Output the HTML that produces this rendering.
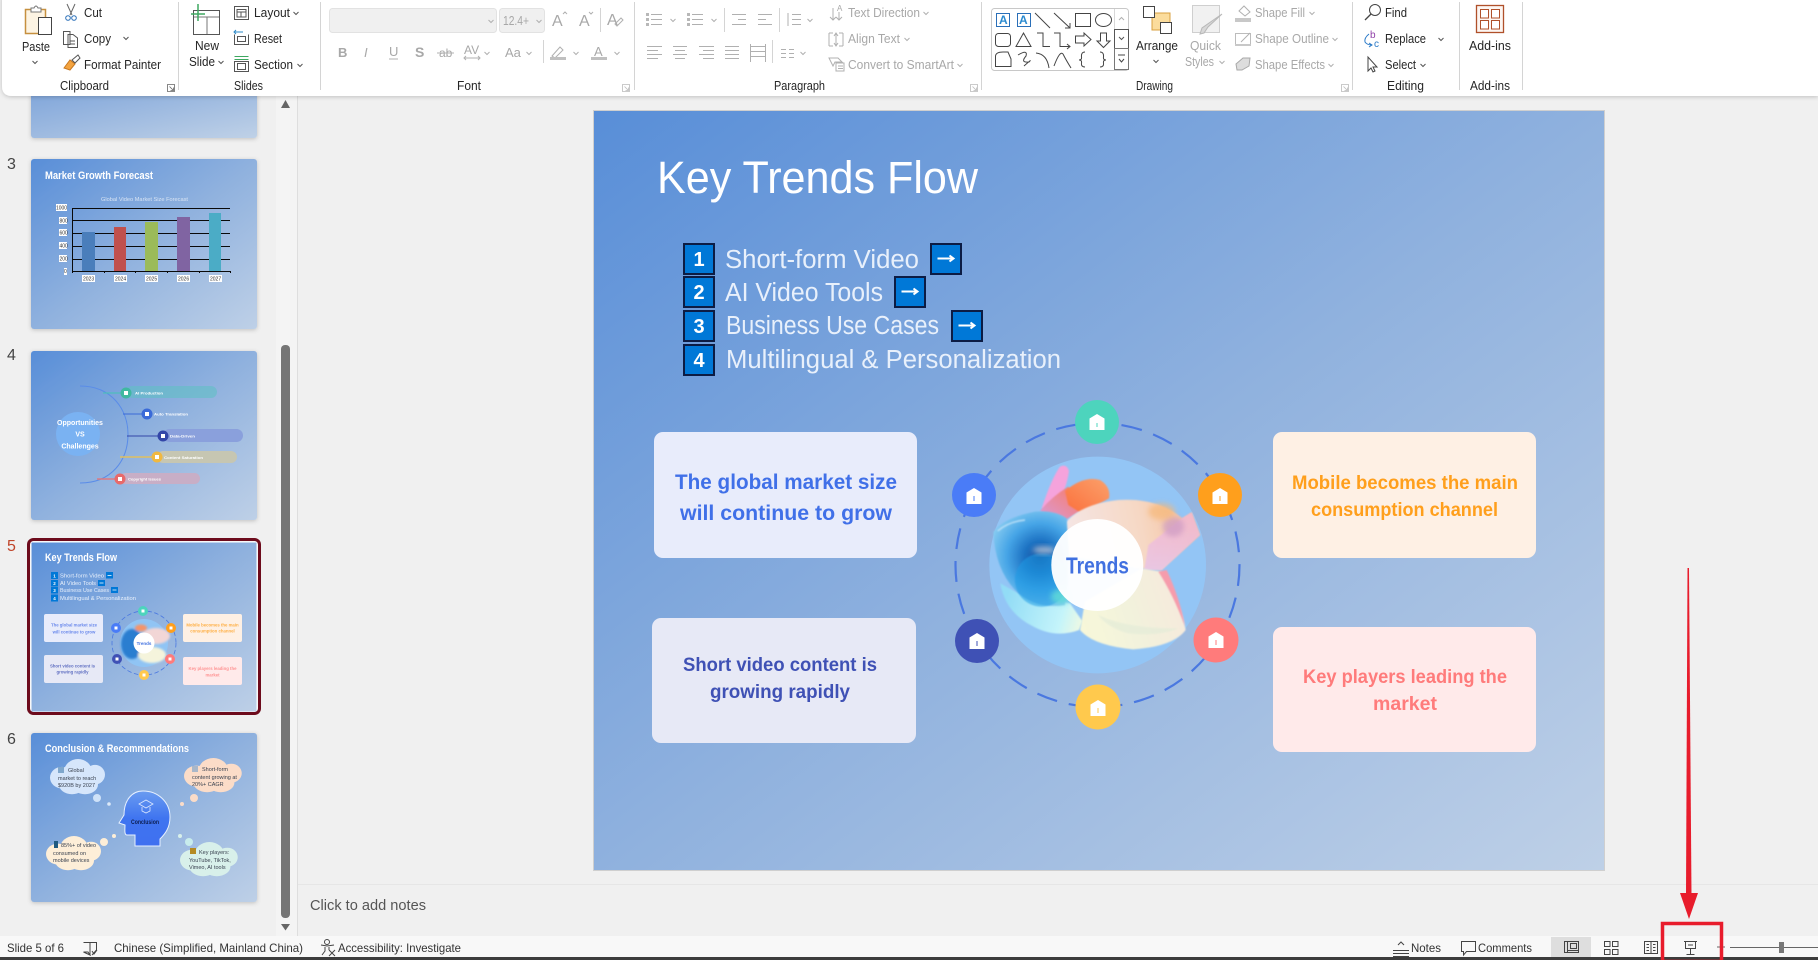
<!DOCTYPE html>
<html lang="en"><head><meta charset="utf-8"><title>Key Trends Flow</title>
<style>
html,body{margin:0;padding:0;background:#f0f0f0;width:1818px;height:960px;overflow:hidden}
svg{display:block;position:absolute;left:0;top:0}
text{font-family:"Liberation Sans",sans-serif;white-space:pre}
.r{font-size:12.5px;fill:#262626}
.d{font-size:12.5px;fill:#a8a8a8}
.i{fill:none;stroke:#555;stroke-width:1}
.g{fill:none;stroke:#b0b0b0;stroke-width:1}
.s{fill:none;stroke:#444;stroke-width:1}
.b{font-weight:bold}
.w{fill:#fff}
</style></head><body>
<svg width="1818" height="960" viewBox="0 0 1818 960" xmlns="http://www.w3.org/2000/svg">
<defs>
<linearGradient id="bg" x1="0" y1="0" x2="1" y2="1"><stop offset="0" stop-color="#588ed8"/><stop offset=".5" stop-color="#8fb1de"/><stop offset="1" stop-color="#bed0e7"/></linearGradient>
<linearGradient id="top2" x1="0" y1="0" x2="1" y2="1"><stop offset="0" stop-color="#7fa5da"/><stop offset="1" stop-color="#bfd1e7"/></linearGradient>
<linearGradient id="head" x1="0" y1="0" x2="0" y2="1"><stop offset="0" stop-color="#6a9cf0"/><stop offset=".5" stop-color="#3f74f0"/><stop offset="1" stop-color="#3f70f0"/></linearGradient>
<radialGradient id="blue" gradientUnits="userSpaceOnUse" cx="165" cy="305" r="165"><stop offset="0" stop-color="#14509f"/><stop offset=".3" stop-color="#1f74c4"/><stop offset=".6" stop-color="#45a4e6"/><stop offset="1" stop-color="#8fd0f2"/></radialGradient>
<linearGradient id="peach" gradientUnits="userSpaceOnUse" x1="240" y1="260" x2="620" y2="180"><stop offset="0" stop-color="#f4e6e6"/><stop offset=".6" stop-color="#f6d8c4"/><stop offset="1" stop-color="#f4c09c"/></linearGradient>
<linearGradient id="pinkr" x1="0" y1="0" x2="0" y2="1"><stop offset="0" stop-color="#f4b8d0"/><stop offset="1" stop-color="#e8c4e8"/></linearGradient>
<linearGradient id="cream" gradientUnits="userSpaceOnUse" x1="260" y1="520" x2="600" y2="400"><stop offset="0" stop-color="#f8f8d8"/><stop offset=".5" stop-color="#f2f2dc"/><stop offset="1" stop-color="#f6e8dc"/></linearGradient>
<linearGradient id="cyan" gradientUnits="userSpaceOnUse" x1="60" y1="440" x2="300" y2="510"><stop offset="0" stop-color="#92dcf6"/><stop offset=".7" stop-color="#c4f4fa"/><stop offset="1" stop-color="#f4fae0"/></linearGradient>
<linearGradient id="orng" x1="0" y1="1" x2="1" y2="0"><stop offset="0" stop-color="#fa6f3c"/><stop offset="1" stop-color="#fca06a"/></linearGradient>
<linearGradient id="mag" x1="0" y1="1" x2="1" y2="0"><stop offset="0" stop-color="#d89ad8"/><stop offset="1" stop-color="#fb7a60"/></linearGradient>
<filter id="bl2" x="-20%" y="-20%" width="140%" height="140%"><feGaussianBlur stdDeviation="2"/></filter>
<filter id="bl1" x="-20%" y="-20%" width="140%" height="140%"><feGaussianBlur stdDeviation="1"/></filter>
<filter id="bl8" x="-40%" y="-40%" width="180%" height="180%"><feGaussianBlur stdDeviation="8"/></filter>
<filter id="sh" x="-5%" y="-20%" width="110%" height="160%"><feDropShadow dx="0" dy="1" stdDeviation="2" flood-color="#000" flood-opacity=".2"/></filter>
<path id="c" d="M-2.5 -1 L0 1.5 L2.5 -1" fill="none" stroke="#555" stroke-width="1"/>
<path id="cd" d="M-2.5 -1 L0 1.5 L2.5 -1" fill="none" stroke="#b0b0b0" stroke-width="1"/>
<path id="lau" d="M0 0H7V7H0Z M2 2L6 6M6 3V6H3" fill="none" stroke="#666" stroke-width=".8"/>
<path id="laud" d="M0 0H7V7H0Z M2 2L6 6M6 3V6H3" fill="none" stroke="#bbb" stroke-width=".8"/>
<path id="home" d="M0 -8 L7.5 -3.5 V8 H-7.5 V-3.5Z" fill="#fff"/>
<g id="cl"><ellipse cx="12" cy="19" rx="12" ry="11"/><ellipse cx="28" cy="13" rx="14" ry="13"/><ellipse cx="45" cy="16" rx="10" ry="10"/><ellipse cx="35" cy="26" rx="13" ry="10"/><ellipse cx="22" cy="26" rx="13" ry="10"/></g>
</defs>

<!-- base -->
<rect width="1818" height="960" fill="#f0f0f0"/>
<rect x="276" y="96" width="21" height="840" fill="#f4f4f4"/>
<line x1="297.500" y1="96" x2="297.500" y2="936" stroke="#dedede"/>
<line x1="298" y1="884.500" x2="1818" y2="884.500" stroke="#e6e6e6"/>

<!-- thumbnails -->
<rect x="31" y="90" width="226" height="48" rx="3" fill="url(#top2)" filter="url(#sh)"/>

<!-- slide 3 -->
<text x="7" y="169" font-size="16" fill="#444">3</text>
<rect x="31" y="159" width="226" height="170" rx="3" fill="url(#bg)" filter="url(#sh)"/>
<text x="45" y="179" font-size="11" class="b w" textLength="108" lengthAdjust="spacingAndGlyphs">Market Growth Forecast</text>
<text x="101" y="201" font-size="5.500" fill="#d8e4f4" textLength="87" lengthAdjust="spacingAndGlyphs">Global Video Market Size Forecast</text>
<g stroke="#0a0a0a" stroke-width="1"><path d="M72 208.500H230M72 220.500H230M72 233.500H230M72 246.500H230M72 259.500H230M72 271.500H230M72.500 208V273M104.500 271V273M135.500 271V273M167.500 271V273M199.500 271V273M230.500 271V273"/></g>
<rect x="82" y="232" width="13" height="39" fill="#4a7ebb"/><rect x="114" y="227" width="12" height="44" fill="#c0504d"/><rect x="145" y="222" width="13" height="49" fill="#9bbb59"/><rect x="177" y="217" width="13" height="54" fill="#8064a2"/><rect x="209" y="213" width="12" height="58" fill="#4bacc6"/>
<g fill="#fff"><rect x="56" y="204" width="11" height="7"/><rect x="59" y="217" width="8" height="7"/><rect x="59" y="229" width="8" height="7"/><rect x="59" y="242" width="8" height="7"/><rect x="59" y="255" width="8" height="7"/><rect x="64" y="268" width="3" height="7"/><rect x="82" y="275" width="13" height="7"/><rect x="114" y="275" width="13" height="7"/><rect x="145" y="275" width="13" height="7"/><rect x="177" y="275" width="13" height="7"/><rect x="209" y="275" width="13" height="7"/></g>
<g font-size="5" fill="#333"><text x="56" y="209.500" textLength="11" lengthAdjust="spacingAndGlyphs">1000</text><text x="59.500" y="222.500">800</text><text x="59.500" y="234.500">600</text><text x="59.500" y="247.500">400</text><text x="59.500" y="260.500">200</text><text x="64" y="273">0</text><text x="83" y="280.500">2023</text><text x="115" y="280.500">2024</text><text x="146" y="280.500">2025</text><text x="178" y="280.500">2026</text><text x="210" y="280.500">2027</text></g>

<!-- slide 4 -->
<text x="7" y="360" font-size="16" fill="#444">4</text>
<rect x="31" y="351" width="226" height="169" rx="3" fill="url(#bg)" filter="url(#sh)"/>
<circle cx="78" cy="434" r="22" fill="#7ab2f2"/>
<g font-size="7" class="b w" text-anchor="middle"><text x="80" y="425">Opportunities</text><text x="80" y="436.500">VS</text><text x="80" y="448.500">Challenges</text></g>
<path d="M80 386 C112 386 128 410 128 434 C128 460 112 483 80 483" fill="none" stroke="#5a8ce8" stroke-width="1"/>
<rect x="126" y="386" width="91" height="12" rx="6" fill="#60bfc4" opacity=".6"/>
<rect x="163" y="429" width="80" height="13" rx="6.500" fill="#8aa0dc"/>
<rect x="157" y="451" width="80" height="12" rx="6" fill="#c6c6b2"/>
<rect x="120" y="473" width="80" height="11" rx="5.500" fill="#c8aec6"/>
<g stroke-width="1" fill="none"><path d="M103 393H126" stroke="#44c4b4"/><path d="M123 414H147" stroke="#3a6ad8"/><path d="M127 436H163" stroke="#3346a8"/><path d="M120 457H157" stroke="#e0c060" stroke-width="1.500"/><path d="M97 479H120" stroke="#e07a80" stroke-width="1.500"/></g>
<circle cx="126" cy="393" r="5.500" fill="#3fb8a0"/><circle cx="147" cy="414" r="5.500" fill="#3a6ad8"/><circle cx="163" cy="436" r="5.500" fill="#3346a8"/><circle cx="157" cy="457" r="5.500" fill="#f0b840"/><circle cx="120" cy="479" r="5.500" fill="#e86a6a"/>
<g fill="#fff"><rect x="124" y="391" width="4" height="4"/><rect x="145" y="412" width="4" height="4"/><rect x="161" y="434" width="4" height="4"/><rect x="155" y="455" width="4" height="4"/><rect x="118" y="477" width="4" height="4"/></g>
<g font-size="4" class="b w"><text x="135" y="394.500" textLength="28" lengthAdjust="spacingAndGlyphs">AI Production</text><text x="154" y="415.500" textLength="34" lengthAdjust="spacingAndGlyphs">Auto Translation</text><text x="170" y="437.500" textLength="25" lengthAdjust="spacingAndGlyphs">Data-Driven</text><text x="164" y="459" textLength="39" lengthAdjust="spacingAndGlyphs">Content Saturation</text><text x="128" y="480.500" textLength="33" lengthAdjust="spacingAndGlyphs">Copyright Issues</text></g>

<!-- slide 5 thumb -->
<text x="7" y="551" font-size="16" fill="#c0452a">5</text>
<rect x="31" y="542" width="226" height="170" fill="url(#bg)" stroke="#fff" stroke-width="1"/>
<rect x="28.500" y="539.500" width="231" height="174" rx="5" fill="none" stroke="#6d0b1c" stroke-width="3"/>
<text x="45" y="561" font-size="11" class="b w" textLength="72" lengthAdjust="spacingAndGlyphs">Key Trends Flow</text>
<g fill="#0078d7"><rect x="51" y="572" width="7" height="7"/><rect x="51" y="580" width="7" height="6.500"/><rect x="51" y="587" width="7" height="6.500"/><rect x="51" y="594.500" width="7" height="7"/><rect x="106" y="572" width="7" height="6.500"/><rect x="98" y="580" width="7" height="6"/><rect x="111" y="587" width="7" height="6"/></g>
<path d="M107.500 575.500H111.500M99.500 583H103.500M112.500 590H116.500" stroke="#fff" fill="none" stroke-width=".7"/>
<g font-size="5.500" fill="#e8f0fb"><text x="60" y="577.500" textLength="44" lengthAdjust="spacingAndGlyphs">Short-form Video</text><text x="60" y="585" textLength="36" lengthAdjust="spacingAndGlyphs">AI Video Tools</text><text x="60" y="592" textLength="49" lengthAdjust="spacingAndGlyphs">Business Use Cases</text><text x="60" y="600" textLength="76" lengthAdjust="spacingAndGlyphs">Multilingual &amp; Personalization</text></g>
<g font-size="4.500" class="b w" text-anchor="middle"><text x="54.500" y="577.500">1</text><text x="54.500" y="585">2</text><text x="54.500" y="592">3</text><text x="54.500" y="600">4</text></g>
<rect x="44" y="614" width="59" height="28" rx="2" fill="#e8ecfb"/><rect x="44" y="655" width="59" height="28" rx="2" fill="#e7e9f6"/><rect x="183" y="614" width="59" height="28" rx="2" fill="#fef0e4"/><rect x="183" y="657" width="59" height="28" rx="2" fill="#ffeaea"/>
<g font-size="4.300" class="b" text-anchor="middle" opacity=".8"><g fill="#4a70e8"><text x="74" y="626.500">The global market size</text><text x="74" y="633.500">will continue to grow</text></g><g fill="#3f51b5"><text x="72.500" y="667.500">Short video content is</text><text x="72.500" y="673.500">growing rapidly</text></g><g fill="#ff9f1c"><text x="212.500" y="626.500">Mobile becomes the main</text><text x="212.500" y="632.500">consumption channel</text></g><g fill="#ff7b7b"><text x="212.500" y="670">Key players leading the</text><text x="212.500" y="676.500">market</text></g></g>
<circle cx="144" cy="643" r="24" fill="#90c4f4"/>
<g filter="url(#bl1)"><ellipse cx="132" cy="644" rx="11" ry="15" fill="#2a7ed0"/><ellipse cx="156" cy="636" rx="14" ry="8" fill="#f2d6d6"/><ellipse cx="152" cy="655" rx="14" ry="8" fill="#f5f4dc"/><ellipse cx="141" cy="628" rx="6" ry="3.500" fill="#f4946a"/></g>
<circle cx="144" cy="643" r="32" fill="none" stroke="#4a78e0" stroke-width=".8" stroke-dasharray="4.500 2.500"/>
<circle cx="144" cy="643" r="10.500" fill="#fff"/><text x="144" y="645" font-size="4.500" class="b" fill="#4070e0" text-anchor="middle">Trends</text>
<circle cx="143" cy="611" r="5" fill="#4dd4bd"/><circle cx="171" cy="628" r="5" fill="#ff9f1c"/><circle cx="170" cy="659" r="5" fill="#ff7b7b"/><circle cx="144" cy="675" r="5" fill="#ffc94d"/><circle cx="117" cy="659" r="5" fill="#3f51b5"/><circle cx="116" cy="628" r="5" fill="#4a7cf7"/>
<g fill="#fff"><rect x="141.500" y="609.500" width="3" height="3"/><rect x="169.500" y="626.500" width="3" height="3"/><rect x="168.500" y="657.500" width="3" height="3"/><rect x="142.500" y="673.500" width="3" height="3"/><rect x="115.500" y="657.500" width="3" height="3"/><rect x="114.500" y="626.500" width="3" height="3"/></g>

<!-- slide 6 -->
<text x="7" y="744" font-size="16" fill="#444">6</text>
<rect x="31" y="733" width="226" height="169" rx="3" fill="url(#bg)" filter="url(#sh)"/>
<text x="45" y="752" font-size="11" class="b w" textLength="144" lengthAdjust="spacingAndGlyphs">Conclusion &amp; Recommendations</text>
<use href="#cl" transform="translate(50 759) scale(1 .98)" fill="#d6e6fb"/>
<use href="#cl" transform="translate(184 758) scale(1.050 .95)" fill="#fbdcc8"/>
<use href="#cl" transform="translate(46 836) scale(1 .95)" fill="#fdeed8"/>
<use href="#cl" transform="translate(180 842) scale(1.050 .95)" fill="#d8f0ea"/>
<circle cx="97" cy="798" r="4" fill="#cfe2f8"/><circle cx="109" cy="804" r="1.800" fill="#dce9f8"/><circle cx="194" cy="798" r="4" fill="#fbdcc8"/><circle cx="182" cy="804" r="2" fill="#fbdcc8"/><circle cx="104" cy="842" r="4" fill="#fdeed8"/><circle cx="114" cy="836" r="2" fill="#fdeed8"/><circle cx="189" cy="842" r="4" fill="#c8ecec"/><circle cx="180" cy="836" r="2" fill="#d8f0ea"/>
<path d="M143 791 C158 791 170 802 170 817 C170 828 165 834 160 839 L160 846 L135 846 L135 835 L127 835 C124 835 125 829 125 825 L119 823 L124 815 C124 800 132 791 143 791 Z" fill="url(#head)" stroke="#e6f0ff" stroke-width="1"/>
<path d="M139 804L146 800L153 804L146 808ZM142 807V811L146 813L150 811V807" fill="none" stroke="#dbe8ff" stroke-width=".8"/>
<text x="131" y="824" font-size="6" class="b" fill="#0c1d50" textLength="28" lengthAdjust="spacingAndGlyphs">Conclusion</text>
<rect x="58" y="767" width="6" height="6" fill="#7fa7cc"/><rect x="192" y="766" width="6" height="6" fill="#a9b7c9"/><rect x="54" y="841" width="4" height="7" fill="#1f5a80"/><rect x="190" y="848" width="6" height="6" fill="#b58a22"/>
<g font-size="5.500" fill="#3a4250"><text x="68" y="772">Global</text><text x="58" y="780">market to reach</text><text x="58" y="787">$920B by 2027</text><text x="202" y="771">Short-form</text><text x="192" y="779">content growing at</text><text x="192" y="786">20%+ CAGR</text><text x="61" y="847">85%+ of video</text><text x="53" y="855">consumed on</text><text x="53" y="862">mobile devices</text><text x="199" y="854">Key players:</text><text x="189" y="862">YouTube, TikTok,</text><text x="189" y="869">Vimeo, AI tools</text></g>

<!-- scrollbar -->
<path d="M281 108L285.500 100L290 108Z" fill="#666"/>
<rect x="281" y="345" width="9" height="573" rx="4" fill="#757575"/>
<path d="M281 924H290L285.500 930.500Z" fill="#666"/>

<!-- main slide -->
<rect x="593.500" y="110.500" width="1011" height="760" fill="url(#bg)" stroke="#cfcfcf"/>
<text x="657" y="193" font-size="45" class="w" textLength="321" lengthAdjust="spacingAndGlyphs">Key Trends Flow</text>
<g fill="#0078d7" stroke="#0c1c44" stroke-width="2"><rect x="684" y="244" width="30" height="30"/><rect x="684" y="277" width="30" height="30"/><rect x="684" y="311" width="30" height="30"/><rect x="684" y="345" width="30" height="30"/><rect x="931" y="244" width="30" height="30"/><rect x="895" y="277" width="30" height="30"/><rect x="952" y="311" width="30" height="30"/></g>
<g font-size="20" class="b w" text-anchor="middle"><text x="699" y="266">1</text><text x="699" y="299">2</text><text x="699" y="333">3</text><text x="699" y="367">4</text></g>
<g fill="none" stroke="#fff" stroke-width="2"><path d="M937.500 258.500H953M949.500 255.500L953.500 258.500L949.500 261.500M901.500 291.500H917M913.500 288.500L917.500 291.500L913.500 294.500M958.500 325.500H974M970.500 322.500L974.500 325.500L970.500 328.500"/></g>
<g font-size="25.500" fill="#e8f0fb"><text x="725" y="268" textLength="194" lengthAdjust="spacingAndGlyphs">Short-form Video</text><text x="725" y="301" textLength="158" lengthAdjust="spacingAndGlyphs">AI Video Tools</text><text x="726" y="334" textLength="213" lengthAdjust="spacingAndGlyphs">Business Use Cases</text><text x="726" y="368" textLength="335" lengthAdjust="spacingAndGlyphs">Multilingual &amp; Personalization</text></g>

<rect x="654" y="432" width="263" height="126" rx="9" fill="#e8ecfb"/>
<rect x="652" y="618" width="264" height="125" rx="9" fill="#e7e9f6"/>
<rect x="1273" y="432" width="263" height="126" rx="9" fill="#fef0e4"/>
<rect x="1273" y="627" width="263" height="125" rx="9" fill="#ffeaea"/>
<g font-size="21" class="b" fill="#4070e8"><text x="675" y="489" textLength="222" lengthAdjust="spacingAndGlyphs">The global market size</text><text x="680" y="520" textLength="212" lengthAdjust="spacingAndGlyphs">will continue to grow</text></g>
<g font-size="19" class="b" fill="#3f51b5"><text x="683" y="671" textLength="194" lengthAdjust="spacingAndGlyphs">Short video content is</text><text x="710" y="698" textLength="140" lengthAdjust="spacingAndGlyphs">growing rapidly</text></g>
<g font-size="19" class="b" fill="#ff9f1c"><text x="1292" y="489" textLength="226" lengthAdjust="spacingAndGlyphs">Mobile becomes the main</text><text x="1311" y="516" textLength="187" lengthAdjust="spacingAndGlyphs">consumption channel</text></g>
<g font-size="19" class="b" fill="#ff7b7b"><text x="1303" y="683" textLength="204" lengthAdjust="spacingAndGlyphs">Key players leading the</text><text x="1373" y="710" textLength="64" lengthAdjust="spacingAndGlyphs">market</text></g>

<!-- centre graphic -->
<g transform="translate(985 455) scale(.33333)">
<circle cx="338" cy="330" r="325" fill="#93c5f5"/>
<path d="M170 160 Q200 70 225 35 Q245 25 252 48 Q245 100 215 155Z" fill="#f5a3dc" filter="url(#bl2)"/>
<path d="M165 168 Q200 125 250 95 L300 160 L240 195Z" fill="url(#mag)" filter="url(#bl2)"/>
<path d="M240 108 Q295 62 345 75 Q378 95 372 130 L290 175 L250 150Z" fill="url(#orng)" filter="url(#bl2)"/>
<path d="M228 225 Q265 150 400 135 Q520 128 592 190 L620 172 L645 240 L530 345 L460 340 L240 300Z" fill="url(#peach)" filter="url(#bl2)"/>
<path d="M478 345 L490 270 L590 190 L620 172 L645 240 L530 345Z" fill="url(#pinkr)" opacity=".85" filter="url(#bl2)"/>
<ellipse cx="565" cy="215" rx="32" ry="30" fill="#cf9cc4" opacity=".75" filter="url(#bl8)"/>
<ellipse cx="530" cy="170" rx="40" ry="25" fill="#f6b878" opacity=".7" filter="url(#bl8)"/>
<path d="M285 525 Q325 572 445 583 Q565 575 602 525 Q590 450 530 350 L470 340 L300 440Z" fill="url(#cream)" filter="url(#bl2)"/>
<path d="M340 480 Q420 520 580 520 Q520 545 430 535 Q370 520 340 480Z" fill="#e4ecd8" opacity=".7" filter="url(#bl2)"/>
<path d="M520 350 L545 345 Q585 430 600 515 Q565 420 520 350Z" fill="#f69cac" filter="url(#bl2)"/>
<path d="M46 385 Q60 470 140 512 Q210 552 282 525 L292 498 L255 445 L100 415Z" fill="url(#cyan)" filter="url(#bl2)"/>
<path d="M25 232 Q50 190 150 170 Q210 165 245 190 L252 300 L240 450 Q150 465 90 405 Q30 340 25 232Z" fill="url(#blue)" filter="url(#bl2)"/>
<circle cx="170" cy="375" r="80" fill="#1b9ae4" opacity=".55" filter="url(#bl2)"/>
<ellipse cx="228" cy="425" rx="30" ry="22" fill="#5fdad8" opacity=".85" filter="url(#bl8)"/>
<ellipse cx="178" cy="285" rx="34" ry="11" fill="#b8c6d8" opacity=".8" filter="url(#bl8)"/>
<path d="M38 228 Q70 200 120 195" fill="none" stroke="#bfe2f8" stroke-width="5" opacity=".8" filter="url(#bl2)"/>
</g>
<circle cx="1097.500" cy="565" r="142" fill="none" stroke="#4a78e0" stroke-width="2.200" stroke-dasharray="21 12"/>
<circle cx="1097.300" cy="565" r="46" fill="#fff" opacity=".96"/>
<text x="1066" y="573.500" font-size="23" class="b" fill="#4070e0" textLength="63" lengthAdjust="spacingAndGlyphs">Trends</text>
<g>
<circle cx="1097" cy="422" r="22" fill="#4dd4bd"/><use href="#home" x="1097" y="422"/><rect x="1096.500" y="423" width="1" height="4" fill="#4dd4bd"/>
<circle cx="1220" cy="495" r="22" fill="#ff9f1c"/><use href="#home" x="1220" y="496"/><rect x="1219.500" y="496" width="1" height="5" fill="#ff9f1c"/>
<circle cx="1216" cy="640" r="22.500" fill="#ff7b7b"/><use href="#home" x="1216" y="640"/><rect x="1215.500" y="640" width="1" height="5" fill="#ff7b7b"/>
<circle cx="1098" cy="707" r="22.500" fill="#ffc94d"/><use href="#home" x="1098" y="708"/><rect x="1097.500" y="708" width="1" height="5" fill="#ffc94d"/>
<circle cx="977" cy="641" r="22" fill="#3f51b5"/><use href="#home" x="977" y="641"/><rect x="976.500" y="641" width="1" height="5" fill="#3f51b5"/>
<circle cx="974" cy="495" r="22" fill="#4a7cf7"/><use href="#home" x="974" y="496"/><rect x="973.500" y="496" width="1" height="5" fill="#4a7cf7"/>
</g>

<text x="310" y="910" font-size="15" fill="#555" textLength="116" lengthAdjust="spacingAndGlyphs">Click to add notes</text>

<!-- ribbon -->
<path d="M2 -4H1818V96H12Q2 96 2 86Z" fill="#fff" filter="url(#sh)"/>
<g stroke="#d4d4d4"><path d="M178.500 2V90M320.500 2V90M634.500 2V90M981.500 2V90M1352.500 2V90M1459.500 2V90M1522.500 2V90M600.500 8V32M543.500 40V63M724.500 8V32M779.500 8V32M772.500 40V63" fill="none"/></g>

<!-- clipboard -->
<rect x="25.500" y="9.500" width="20" height="24" fill="#fdf4e3" stroke="#c6903f" stroke-width="1.500"/>
<path d="M31 11V8H34Q36 4 38 8H41V12H31Z" fill="#fff" stroke="#777"/>
<rect x="38.500" y="17.500" width="13" height="17" fill="#fff" stroke="#444"/>
<text x="22" y="51" class="r" textLength="28" lengthAdjust="spacingAndGlyphs">Paste</text><use href="#c" x="35" y="62"/>
<path d="M67 4L72 15M75 4L70 15" fill="none" stroke="#666"/><circle cx="68" cy="18" r="2.300" fill="none" stroke="#2a6fb8"/><circle cx="74" cy="18" r="2.300" fill="none" stroke="#2a6fb8"/>
<text x="84" y="17" class="r" textLength="18" lengthAdjust="spacingAndGlyphs">Cut</text>
<path d="M63.500 31.500H70V44.500H63.500ZM68 34.500H73L77.500 38V47.500H68Z" fill="#fff" stroke="#555"/><path d="M70 41H75M70 44H75" stroke="#555"/>
<text x="84" y="43" class="r" textLength="27" lengthAdjust="spacingAndGlyphs">Copy</text><use href="#c" x="126" y="38"/>
<path d="M64 68L70 60L75 64L70 70Z" fill="#f4a440" stroke="#c87820"/><path d="M72 60L78 55L80 58L75 63Z" fill="#fff" stroke="#555"/>
<text x="84" y="69" class="r" textLength="77" lengthAdjust="spacingAndGlyphs">Format Painter</text>
<text x="60" y="90" class="r" textLength="49" lengthAdjust="spacingAndGlyphs">Clipboard</text><use href="#lau" x="167.500" y="84.500"/>

<!-- slides -->
<rect x="193.500" y="10.500" width="26" height="24" fill="#fff" stroke="#555"/><path d="M194 17H219M207 17V34" stroke="#777" fill="none"/><path d="M191 14H205M198 4V21" stroke="#3ea860" stroke-width="1.500" fill="none"/>
<text x="195" y="50" class="r" textLength="24" lengthAdjust="spacingAndGlyphs">New</text><text x="189" y="66" class="r" textLength="26" lengthAdjust="spacingAndGlyphs">Slide</text><use href="#c" x="221" y="62"/>
<path d="M234.500 6.500H248.500V19.500H234.500ZM237 9.500H246V12H237ZM237 12V17H241V12M241 12V17H246V12" fill="none" stroke="#555"/>
<text x="254" y="17" class="r" textLength="36" lengthAdjust="spacingAndGlyphs">Layout</text><use href="#c" x="296" y="13"/>
<path d="M234.500 34.500V44.500H248.500V34.500" fill="none" stroke="#555"/><rect x="237.500" y="36.500" width="8" height="5" fill="none" stroke="#555"/><path d="M235 32H243M236 34L234 32L236 30" fill="none" stroke="#2a88c8"/>
<text x="254" y="43" class="r" textLength="28" lengthAdjust="spacingAndGlyphs">Reset</text>
<path d="M234.500 56.500H248.500M234.500 59.500H248.500" stroke="#3ea860" fill="none"/><rect x="234.500" y="61.500" width="14" height="10" fill="none" stroke="#555"/><rect x="237.500" y="63.500" width="8" height="6" fill="none" stroke="#555"/>
<text x="254" y="69" class="r" textLength="39" lengthAdjust="spacingAndGlyphs">Section</text><use href="#c" x="300" y="65"/>
<text x="234" y="90" class="r" textLength="29" lengthAdjust="spacingAndGlyphs">Slides</text>

<!-- font -->
<rect x="329.500" y="8.500" width="167" height="24" rx="3" fill="#f0f0f0" stroke="#e2e2e2"/><use href="#cd" x="491" y="21"/>
<rect x="499.500" y="8.500" width="45" height="24" rx="3" fill="#f0f0f0" stroke="#e2e2e2"/><text x="503" y="25" class="d" textLength="26" lengthAdjust="spacingAndGlyphs">12.4+</text><use href="#cd" x="539" y="21"/>
<g font-size="16" fill="#a8a8a8"><text x="552" y="26">A</text><text x="579" y="26">A</text><text x="607" y="25">A</text></g><path d="M563 14L565 12L567 14M589 12L591 14L593 12" class="g"/><path d="M615 24L621 18L623 20L617 26Z" class="g"/>
<text x="338" y="57" font-size="13" class="b" fill="#a8a8a8">B</text><text x="364" y="57" font-size="13" font-style="italic" font-family="Liberation Serif" fill="#a8a8a8">I</text><text x="389" y="56" font-size="13" fill="#a8a8a8">U</text><path d="M389 59H398" class="g"/><text x="415" y="57" font-size="14" class="b" fill="#a8a8a8">S</text><text x="439" y="57" font-size="12" fill="#a8a8a8">ab</text><path d="M437 53H454" class="g"/><text x="464" y="54" font-size="12" fill="#a8a8a8">AV</text><path d="M464 58H480M466 56L464 58L466 60M478 56L480 58L478 60" class="g"/><use href="#cd" x="487" y="53"/><text x="505" y="57" font-size="13" fill="#a8a8a8">Aa</text><use href="#cd" x="529" y="53"/>
<path d="M552 56L560 47L563 50L555 58Z" class="g"/><rect x="550" y="57" width="16" height="3" fill="#c0c0c0"/><use href="#cd" x="576" y="53"/><text x="594" y="56" font-size="13" fill="#a8a8a8">A</text><rect x="591" y="57" width="16" height="3" fill="#c0c0c0"/><use href="#cd" x="617" y="53"/>
<text x="457" y="90" class="r" textLength="24" lengthAdjust="spacingAndGlyphs">Font</text><use href="#laud" x="622.500" y="84.500"/>

<!-- paragraph -->
<path d="M651 14.500H662M651 19.500H662M651 24.500H662M692 14.500H703M692 19.500H703M692 24.500H703M732 14.500H746M738 19.500H746M738 24.500H746M732 24.500H746M758 14.500H772M758 19.500H766M758 24.500H772M792 14.500H801M792 19.500H801M792 24.500H801M788 13V26" class="g"/>
<g fill="#b8b8b8"><rect x="646" y="13" width="3" height="3"/><rect x="646" y="18" width="3" height="3"/><rect x="646" y="23" width="3" height="3"/><rect x="687" y="13" width="3" height="3"/><rect x="687" y="18" width="3" height="3"/><rect x="687" y="23" width="3" height="3"/></g>
<use href="#cd" x="673" y="20"/><use href="#cd" x="714" y="20"/><use href="#cd" x="810" y="20"/>
<path d="M647 46.500H662M647 50.500H658M647 54.500H662M647 58.500H658M673 46.500H687M675 50.500H685M673 54.500H687M675 58.500H685M699 46.500H714M703 50.500H714M699 54.500H714M703 58.500H714M725 46.500H739M725 50.500H739M725 54.500H739M725 58.500H739M750.500 44V62M765.500 44V62M751 46.500H765M751 51.500H765M751 56.500H765M781 49.500H786M781 53.500H786M781 57.500H786M789 49.500H794M789 53.500H794M789 57.500H794" class="g"/><use href="#cd" x="803" y="53"/>
<path d="M833 8V20M830 17L833 20L836 17M839 12V20M836 17L839 20L842 17" class="g"/><text x="837" y="11" font-size="8" fill="#a8a8a8">A</text>
<text x="848" y="17" class="d" textLength="72" lengthAdjust="spacingAndGlyphs">Text Direction</text><use href="#cd" x="926" y="13"/>
<path d="M829 33H833M839 33H843M829 33V46M843 33V46M829 46H833M839 46H843M836 33V46M834 36L836 33L838 36M834 43L836 46L838 43" class="g"/>
<text x="848" y="43" class="d" textLength="52" lengthAdjust="spacingAndGlyphs">Align Text</text><use href="#cd" x="907" y="39"/>
<path d="M829 58H838L842 62H835L833 66ZM836 63H844V71H836ZM838 66H843M838 68.500H843" class="g"/>
<text x="848" y="69" class="d" textLength="106" lengthAdjust="spacingAndGlyphs">Convert to SmartArt</text><use href="#cd" x="960" y="65"/>
<text x="774" y="90" class="r" textLength="51" lengthAdjust="spacingAndGlyphs">Paragraph</text><use href="#laud" x="970.500" y="84.500"/>

<!-- shapes gallery -->
<rect x="991.500" y="8.500" width="137" height="62" rx="3" fill="#fff" stroke="#c8c8c8"/>
<path d="M1114.500 9V70" stroke="#d8d8d8"/>
<rect x="1114.500" y="29.500" width="14" height="19" fill="#fff" stroke="#555"/><rect x="1114.500" y="48.500" width="14" height="21" fill="#fff" stroke="#777"/>
<path d="M1119 20L1121.500 17.500L1124 20" class="g"/><use href="#c" x="1121.500" y="38"/><path d="M1118 55H1125M1119 59L1121.500 62L1124 59" class="s"/>
<rect x="996.500" y="13.500" width="13" height="13" fill="#fff" stroke="#2a6fb8"/><text x="999" y="24" font-size="12" class="b" fill="#2a8ad0">A</text>
<rect x="1017.500" y="13.500" width="13" height="13" fill="#fff" stroke="#2a6fb8"/><text x="1019" y="24" font-size="12" class="b" fill="#2a8ad0">A</text>
<g class="s"><path d="M1035 13L1050 28M1054 13L1070 28M1070 23V28H1065"/><rect x="1075.500" y="13.500" width="15" height="13"/><ellipse cx="1103.500" cy="20" rx="8" ry="6.500"/><rect x="995.500" y="33.500" width="15" height="13" rx="3"/><path d="M1023.500 33L1031 46.500H1016ZM1037 33H1043V46.500H1050M1054 33H1060V46.500H1070M1067 44L1070 46.500L1067 49M1075.500 36H1084V33L1091 39.500L1084 46V43H1075.500ZM1100.500 33H1106.500V41H1110L1103.500 47.500L1097 41H1100.500Z"/><path d="M995.500 66.500V56Q996 52 1003 52H1008L1011 59V66.500ZM1018 55Q1028 49 1026 56Q1020 63 1029 62Q1033 58 1024 66M1036 53Q1047 54 1049 68M1054 66Q1060 50 1063 54Q1066 60 1071 68M1085 52Q1081 52 1081.500 57Q1082 60 1079 60Q1082 60 1081.500 63Q1081 67 1085 67M1100 52Q1104 52 1103.500 57Q1103 60 1106 60Q1103 60 1103.500 63Q1104 67 1100 67"/></g>

<text x="1136" y="50" class="r" textLength="42" lengthAdjust="spacingAndGlyphs">Arrange</text><use href="#c" x="1156" y="61"/>
<rect x="1152" y="13" width="18" height="17" fill="#fbdc9c" stroke="#d8a040"/><rect x="1143.500" y="6.500" width="11" height="11" fill="#fff" stroke="#444"/><rect x="1160.500" y="22.500" width="11" height="11" fill="#fff" stroke="#444"/>
<text x="1190" y="50" class="d" textLength="31" lengthAdjust="spacingAndGlyphs">Quick</text><text x="1185" y="66" class="d" textLength="29" lengthAdjust="spacingAndGlyphs">Styles</text><use href="#cd" x="1222" y="62"/>
<rect x="1192.500" y="5.500" width="27" height="27" fill="#f1f1f1" stroke="#cfcfcf"/><path d="M1222 14L1208 27L1204 33L1200 34L1202 28Z" fill="#d8d8d8" stroke="#b8b8b8"/>
<rect x="1235" y="18" width="16" height="4" fill="#c8c8c8"/><path d="M1239 11L1244 6L1250 12L1245 16Z" class="g"/><text x="1255" y="17" class="d" textLength="50" lengthAdjust="spacingAndGlyphs">Shape Fill</text><use href="#cd" x="1312" y="13"/>
<rect x="1235.500" y="33.500" width="15" height="11" fill="none" stroke="#bcbcbc"/><rect x="1235" y="44" width="16" height="2" fill="#c8c8c8"/><path d="M1241 42L1250 33" class="g"/><text x="1255" y="43" class="d" textLength="74" lengthAdjust="spacingAndGlyphs">Shape Outline</text><use href="#cd" x="1335" y="39"/>
<path d="M1236 64L1243 58H1250L1249 66L1242 70H1237Z" fill="#ddd" stroke="#a8a8a8"/><text x="1255" y="69" class="d" textLength="70" lengthAdjust="spacingAndGlyphs">Shape Effects</text><use href="#cd" x="1331" y="65"/>
<text x="1136" y="90" class="r" textLength="37" lengthAdjust="spacingAndGlyphs">Drawing</text><use href="#laud" x="1341.500" y="84.500"/>

<!-- editing -->
<circle cx="1375" cy="10" r="5.500" fill="none" stroke="#444"/><path d="M1371 14L1365 20" stroke="#444" stroke-width="1.300"/>
<text x="1385" y="17" class="r" textLength="22" lengthAdjust="spacingAndGlyphs">Find</text>
<text x="1370" y="38" font-size="10" fill="#9040a8">b</text><text x="1374" y="47" font-size="10" fill="#2a7ac8">c</text><path d="M1369 34Q1364 38 1365 42Q1367 45 1372 45M1369 43L1372 45L1369 47" fill="none" stroke="#2a7ac8"/>
<text x="1385" y="43" class="r" textLength="41" lengthAdjust="spacingAndGlyphs">Replace</text><use href="#c" x="1441" y="39"/>
<path d="M1368 57V71L1371 68L1373 72L1375 71L1373 67H1377Z" fill="#fff" stroke="#444"/>
<text x="1385" y="69" class="r" textLength="31" lengthAdjust="spacingAndGlyphs">Select</text><use href="#c" x="1423" y="65"/>
<text x="1387" y="90" class="r" textLength="37" lengthAdjust="spacingAndGlyphs">Editing</text>
<rect x="1476.500" y="5.500" width="27" height="27" fill="#fdf6f2" stroke="#b0502a" stroke-width="1.300"/>
<path d="M1480.500 9.500H1488.500V18H1480.500ZM1491.500 9.500H1499.500V18H1491.500ZM1480.500 20.500H1488.500V29H1480.500ZM1491.500 20.500H1499.500V29H1491.500Z" fill="#fff" stroke="#b0502a"/>
<text x="1469" y="50" class="r" textLength="42" lengthAdjust="spacingAndGlyphs">Add-ins</text>
<text x="1470" y="90" class="r" textLength="40" lengthAdjust="spacingAndGlyphs">Add-ins</text>

<!-- status bar -->
<rect x="0" y="936" width="1818" height="21" fill="#f8f8f8"/>
<rect x="0" y="957" width="1818" height="3" fill="#3d3d3d"/>
<rect x="1551" y="937" width="40" height="20" fill="#dedede"/>
<g font-size="12" fill="#333">
<text x="7" y="952" textLength="57" lengthAdjust="spacingAndGlyphs">Slide 5 of 6</text>
<text x="114" y="952" textLength="189" lengthAdjust="spacingAndGlyphs">Chinese (Simplified, Mainland China)</text>
<text x="338" y="952" textLength="123" lengthAdjust="spacingAndGlyphs">Accessibility: Investigate</text>
<text x="1411" y="952" textLength="30" lengthAdjust="spacingAndGlyphs">Notes</text>
<text x="1478" y="952" textLength="54" lengthAdjust="spacingAndGlyphs">Comments</text>
</g>
<path d="M83.500 942.500H90V955M90 942.500H96.500V950L92 955M90 955L88 952H83.500ZM92 951L94 954L97 950" class="s"/>
<circle cx="327" cy="942" r="2.500" class="s"/><path d="M321 945L327 946L334 945M325 947V951L322 955M329 947V950M329 950L335 956M335 950L329 956" class="s"/>
<path d="M1393 950.500H1409M1393 953.500H1409M1393 956.500H1409M1398 945L1401 942L1404 945" class="s"/>
<path d="M1461.500 941.500H1475.500V951.500H1466.500L1463.500 955V951.500H1461.500Z" fill="none" stroke="#444"/>
<rect x="1564.500" y="941.500" width="14" height="11" class="s"/><path d="M1567.500 941.500V952.500M1570.500 943.500H1576.500V948.500H1570.500ZM1567.500 950.500H1578" class="s"/>
<path d="M1604.500 941.500H1610V946.500H1604.500ZM1612.500 941.500H1618V946.500H1612.500ZM1604.500 949.500H1610V954.500H1604.500ZM1612.500 949.500H1618V954.500H1612.500Z" class="s"/>
<path d="M1644.500 941.500H1657.500V953.500H1644.500ZM1651 941.500V953.500M1646.500 944.500H1649M1646.500 947.500H1649M1646.500 950.500H1649M1653 944.500H1655.500M1653 947.500H1655.500M1653 950.500H1655.500" class="s"/>
<path d="M1684 941.500H1697M1685.500 941.500V948.500H1695.500V941.500M1690.500 948.500V954M1686.500 954.500H1694.500M1688 945H1693" class="s"/>
<path d="M1717 947H1725M1730 947.500H1818" stroke="#666" fill="none"/>
<rect x="1779" y="942" width="5" height="11" fill="#777"/>

<!-- red annotation -->
<path d="M1687.500 568H1689L1691.500 895H1686Z" fill="#e81c2c"/>
<path d="M1680 893H1698L1689 919Z" fill="#e81c2c"/>
<rect x="1662.500" y="923.500" width="59" height="38" fill="none" stroke="#e81c2c" stroke-width="3.500"/>
</svg>
</body></html>
